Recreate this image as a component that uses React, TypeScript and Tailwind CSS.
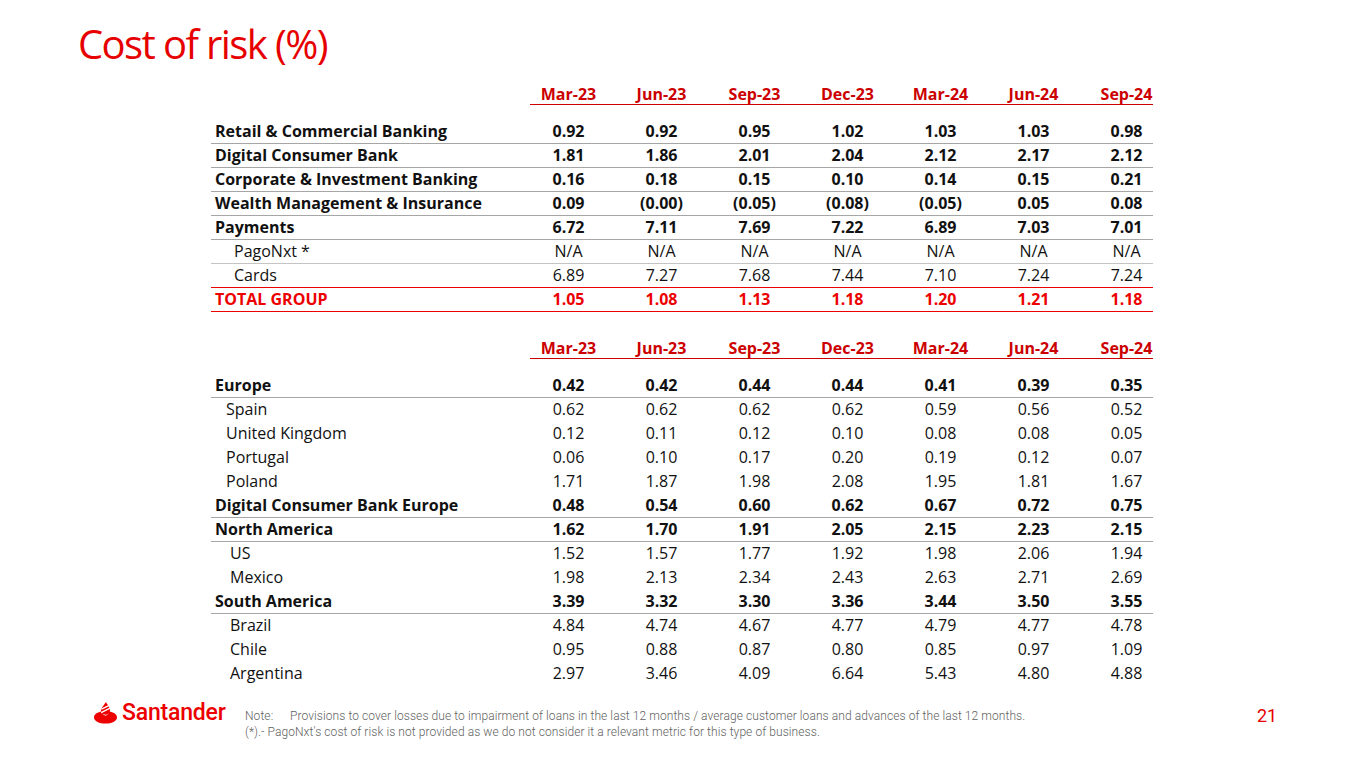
import React from "react";

type Row = {
  label: string;
  values: string[];
  kind: "bold" | "sub" | "sub2" | "total" | "sub1";
  line?: "gray" | "light" | "red" | "none";
};

const periods = ["Mar-23", "Jun-23", "Sep-23", "Dec-23", "Mar-24", "Jun-24", "Sep-24"];

const businessRows: Row[] = [
  { label: "Retail & Commercial Banking", values: ["0.92", "0.92", "0.95", "1.02", "1.03", "1.03", "0.98"], kind: "bold", line: "gray" },
  { label: "Digital Consumer Bank", values: ["1.81", "1.86", "2.01", "2.04", "2.12", "2.17", "2.12"], kind: "bold", line: "gray" },
  { label: "Corporate & Investment Banking", values: ["0.16", "0.18", "0.15", "0.10", "0.14", "0.15", "0.21"], kind: "bold", line: "gray" },
  { label: "Wealth Management & Insurance", values: ["0.09", "(0.00)", "(0.05)", "(0.08)", "(0.05)", "0.05", "0.08"], kind: "bold", line: "gray" },
  { label: "Payments", values: ["6.72", "7.11", "7.69", "7.22", "6.89", "7.03", "7.01"], kind: "bold", line: "gray" },
  { label: "PagoNxt *", values: ["N/A", "N/A", "N/A", "N/A", "N/A", "N/A", "N/A"], kind: "sub", line: "light" },
  { label: "Cards", values: ["6.89", "7.27", "7.68", "7.44", "7.10", "7.24", "7.24"], kind: "sub", line: "red" },
  { label: "TOTAL GROUP", values: ["1.05", "1.08", "1.13", "1.18", "1.20", "1.21", "1.18"], kind: "total", line: "red" },
];

const regionRows: Row[] = [
  { label: "Europe", values: ["0.42", "0.42", "0.44", "0.44", "0.41", "0.39", "0.35"], kind: "bold", line: "gray" },
  { label: "Spain", values: ["0.62", "0.62", "0.62", "0.62", "0.59", "0.56", "0.52"], kind: "sub1" },
  { label: "United Kingdom", values: ["0.12", "0.11", "0.12", "0.10", "0.08", "0.08", "0.05"], kind: "sub1" },
  { label: "Portugal", values: ["0.06", "0.10", "0.17", "0.20", "0.19", "0.12", "0.07"], kind: "sub1" },
  { label: "Poland", values: ["1.71", "1.87", "1.98", "2.08", "1.95", "1.81", "1.67"], kind: "sub1" },
  { label: "Digital Consumer Bank Europe", values: ["0.48", "0.54", "0.60", "0.62", "0.67", "0.72", "0.75"], kind: "bold", line: "gray" },
  { label: "North America", values: ["1.62", "1.70", "1.91", "2.05", "2.15", "2.23", "2.15"], kind: "bold", line: "gray" },
  { label: "US", values: ["1.52", "1.57", "1.77", "1.92", "1.98", "2.06", "1.94"], kind: "sub2" },
  { label: "Mexico", values: ["1.98", "2.13", "2.34", "2.43", "2.63", "2.71", "2.69"], kind: "sub2" },
  { label: "South America", values: ["3.39", "3.32", "3.30", "3.36", "3.44", "3.50", "3.55"], kind: "bold", line: "gray" },
  { label: "Brazil", values: ["4.84", "4.74", "4.67", "4.77", "4.79", "4.77", "4.78"], kind: "sub2" },
  { label: "Chile", values: ["0.95", "0.88", "0.87", "0.80", "0.85", "0.97", "1.09"], kind: "sub2" },
  { label: "Argentina", values: ["2.97", "3.46", "4.09", "6.64", "5.43", "4.80", "4.88"], kind: "sub2" },
];

const gridCols = "grid grid-cols-[311px_93px_93px_93px_93px_93px_93px_73px]";

function HeaderRow() {
  return (
    <div>
      <div className={`${gridCols} h-[18px] leading-[17px] text-[16px] font-bold text-[#cc0000]`}>
        <div />
        {periods.map((p, i) => (
          <div key={p} className={i === 6 ? "text-center pl-[20px]" : "text-center"}>
            {p}
          </div>
        ))}
      </div>
      <div className="ml-[319px] h-px bg-[#cc0000]" />
    </div>
  );
}

function DataRow({ row }: { row: Row }) {
  const lineClass =
    row.line === "gray"
      ? "border-b border-[#a6a6a6]"
      : row.line === "light"
      ? "border-b border-[#c4c4c4]"
      : row.line === "red"
      ? "border-b border-[#ec0000]"
      : "border-b border-transparent";
  const textClass =
    row.kind === "total"
      ? "font-bold text-[#ec0000]"
      : row.kind === "bold"
      ? "font-bold text-[#111]"
      : "font-normal text-[#111]";
  const padClass =
    row.kind === "sub" ? "pl-[23px]" : row.kind === "sub1" ? "pl-[15px]" : row.kind === "sub2" ? "pl-[19px]" : "pl-[4px]";
  return (
    <div className={`${gridCols} h-[24px] items-center text-[16px] leading-[23px] ${lineClass} ${textClass}`}>
      <div className={padClass}>{row.label}</div>
      {row.values.map((v, i) => (
        <div key={i} className={i === 6 ? "text-center pl-[20px]" : "text-center"}>
          {v}
        </div>
      ))}
    </div>
  );
}

function Table({ rows }: { rows: Row[] }) {
  return (
    <div className="w-[942px] ml-[211px]">
      <HeaderRow />
      <div className="mt-[15px]">
        {rows.map((r) => (
          <DataRow key={r.label} row={r} />
        ))}
      </div>
    </div>
  );
}

function SantanderLogo() {
  return (
    <div className="flex items-center gap-[4px] text-[#ec0000]">
      <svg width="25" height="22" viewBox="0 0 24 22">
        <path
          d="M0.5 15.5 C0.5 12 4.5 10.2 8.2 9.6 C8.6 11.8 10 13.2 12 13.8 C14 13.2 15.4 11.8 15.8 9.6 C19.5 10.2 23.5 12 23.5 15.5 C23.5 19.3 18 21.6 12 21.6 C6 21.6 0.5 19.3 0.5 15.5 Z"
          fill="#ec0000"
        />
        <path
          d="M12.5 0 C13.5 2.5 16.5 5 16.5 8.5 C16.5 11 14.5 12.6 12 12.8 C9.5 12.6 7.5 11 7.5 8.8 C7.5 6.5 9 5 10.2 3.2 C10.8 2.2 11.6 1.2 12.5 0 Z"
          fill="#ec0000"
        />
        <path d="M8 7.2 L15.2 3.6" stroke="#fff" strokeWidth="1.3" />
        <path d="M7.6 10.6 L16.6 6.2" stroke="#fff" strokeWidth="1.3" />
      </svg>
      <span className="text-[23px] leading-[22px] font-medium font-['Roboto',sans-serif] tracking-[-0.2px]">Santander</span>
    </div>
  );
}

export default function App() {
  return (
    <div className="w-[1365px] h-[768px] bg-white font-['Open_Sans',sans-serif] overflow-hidden">
      <div className="pt-[20px] pl-[78px]">
        <h1 className="text-[40px] leading-[48px] text-[#e60000] font-normal tracking-[-1.6px]">
          Cost of risk (%)
        </h1>
      </div>
      <div className="mt-[18px]">
        <Table rows={businessRows} />
      </div>
      <div className="mt-[28px]">
        <Table rows={regionRows} />
      </div>
      <div className="mt-[16px] flex pl-[93px]">
        <div className="w-[152px] h-[22px] flex items-center">
          <SantanderLogo />
        </div>
        <div className="w-[1012px] pt-[6px] text-[12px] leading-[16px] text-[#5f5f5f] font-['Roboto',sans-serif] font-light tracking-[0.08px]">
          <div>
            <span className="inline-block w-[45px]">Note:</span>
            Provisions to cover losses due to impairment of loans in the last 12 months / average customer loans and advances of the last 12 months.
          </div>
          <div>(*).- PagoNxt's cost of risk is not provided as we do not consider it a relevant metric for this type of business.</div>
        </div>
        <div className="pt-[4px] text-[18px] leading-[20px] text-[#e60000] font-['Roboto',sans-serif]">21</div>
      </div>
    </div>
  );
}
